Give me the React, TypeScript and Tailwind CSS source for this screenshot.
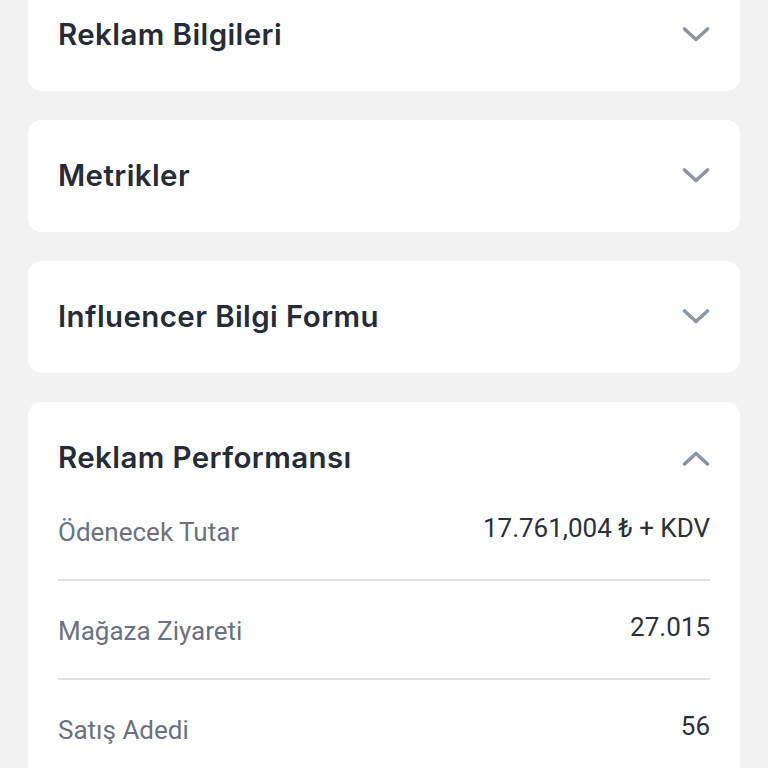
import { useState } from 'react';

type Row = { label: string; value: string };

const rows: Row[] = [
  { label: 'Ödenecek Tutar', value: '17.761,004 ₺ + KDV' },
  { label: 'Mağaza Ziyareti', value: '27.015' },
  { label: 'Satış Adedi', value: '56' },
];

function Chevron({ open }: { open: boolean }) {
  return (
    <svg width="30" height="18" viewBox="0 0 30 18" fill="none" className="text-[#8e96a5]">
      <path
        d={open ? 'M3.5 15 L15 4.5 L26.5 15' : 'M3.5 3 L15 13.5 L26.5 3'}
        stroke="currentColor"
        strokeWidth="3.6"
        strokeLinecap="round"
        strokeLinejoin="round"
      />
    </svg>
  );
}

function Section({
  title,
  open,
  onToggle,
  children,
}: {
  title: string;
  open: boolean;
  onToggle: () => void;
  children?: React.ReactNode;
}) {
  return (
    <div className="bg-white rounded-[14px] px-[30px]">
      <button onClick={onToggle} className="w-full h-[112px] flex items-center justify-between text-left">
        <span className="text-[29.5px] leading-[36px] font-semibold tracking-[0.4px] text-[#252b37] font-['Inter',sans-serif] -translate-y-[1px]">
          {title}
        </span>
        <span className="-mr-[1px]">
          <Chevron open={open} />
        </span>
      </button>
      {open && children}
    </div>
  );
}

export default function App() {
  const [openKey, setOpenKey] = useState<string | null>('perf');
  const toggle = (k: string) => setOpenKey(openKey === k ? null : k);

  return (
    <div className="bg-[#f2f2f2] px-[28px] overflow-hidden h-[768px]">
      <div className="flex flex-col gap-[29px] mt-[-21px]">
        <Section title="Reklam Bilgileri" open={openKey === 'info'} onToggle={() => toggle('info')} />
        <Section title="Metrikler" open={openKey === 'metrics'} onToggle={() => toggle('metrics')} />
        <Section title="Influencer Bilgi Formu" open={openKey === 'form'} onToggle={() => toggle('form')} />
        <Section title="Reklam Performansı" open={openKey === 'perf'} onToggle={() => toggle('perf')}>
          <div className="font-['Roboto',sans-serif]">
            {rows.map((r, i) => (
              <div
                key={r.label}
                className={`flex items-center justify-between ${i === 0 ? 'pt-[2px]' : 'pt-[34px]'} pb-[31px] border-b-2 border-[#e0e0e0]`}
              >
                <span className="text-[26px] leading-[32px] text-[#6b7180]">{r.label}</span>
                <span className="text-[26px] leading-[32px] text-[#2b303b] -translate-y-1">{r.value}</span>
              </div>
            ))}
          </div>
        </Section>
      </div>
    </div>
  );
}
